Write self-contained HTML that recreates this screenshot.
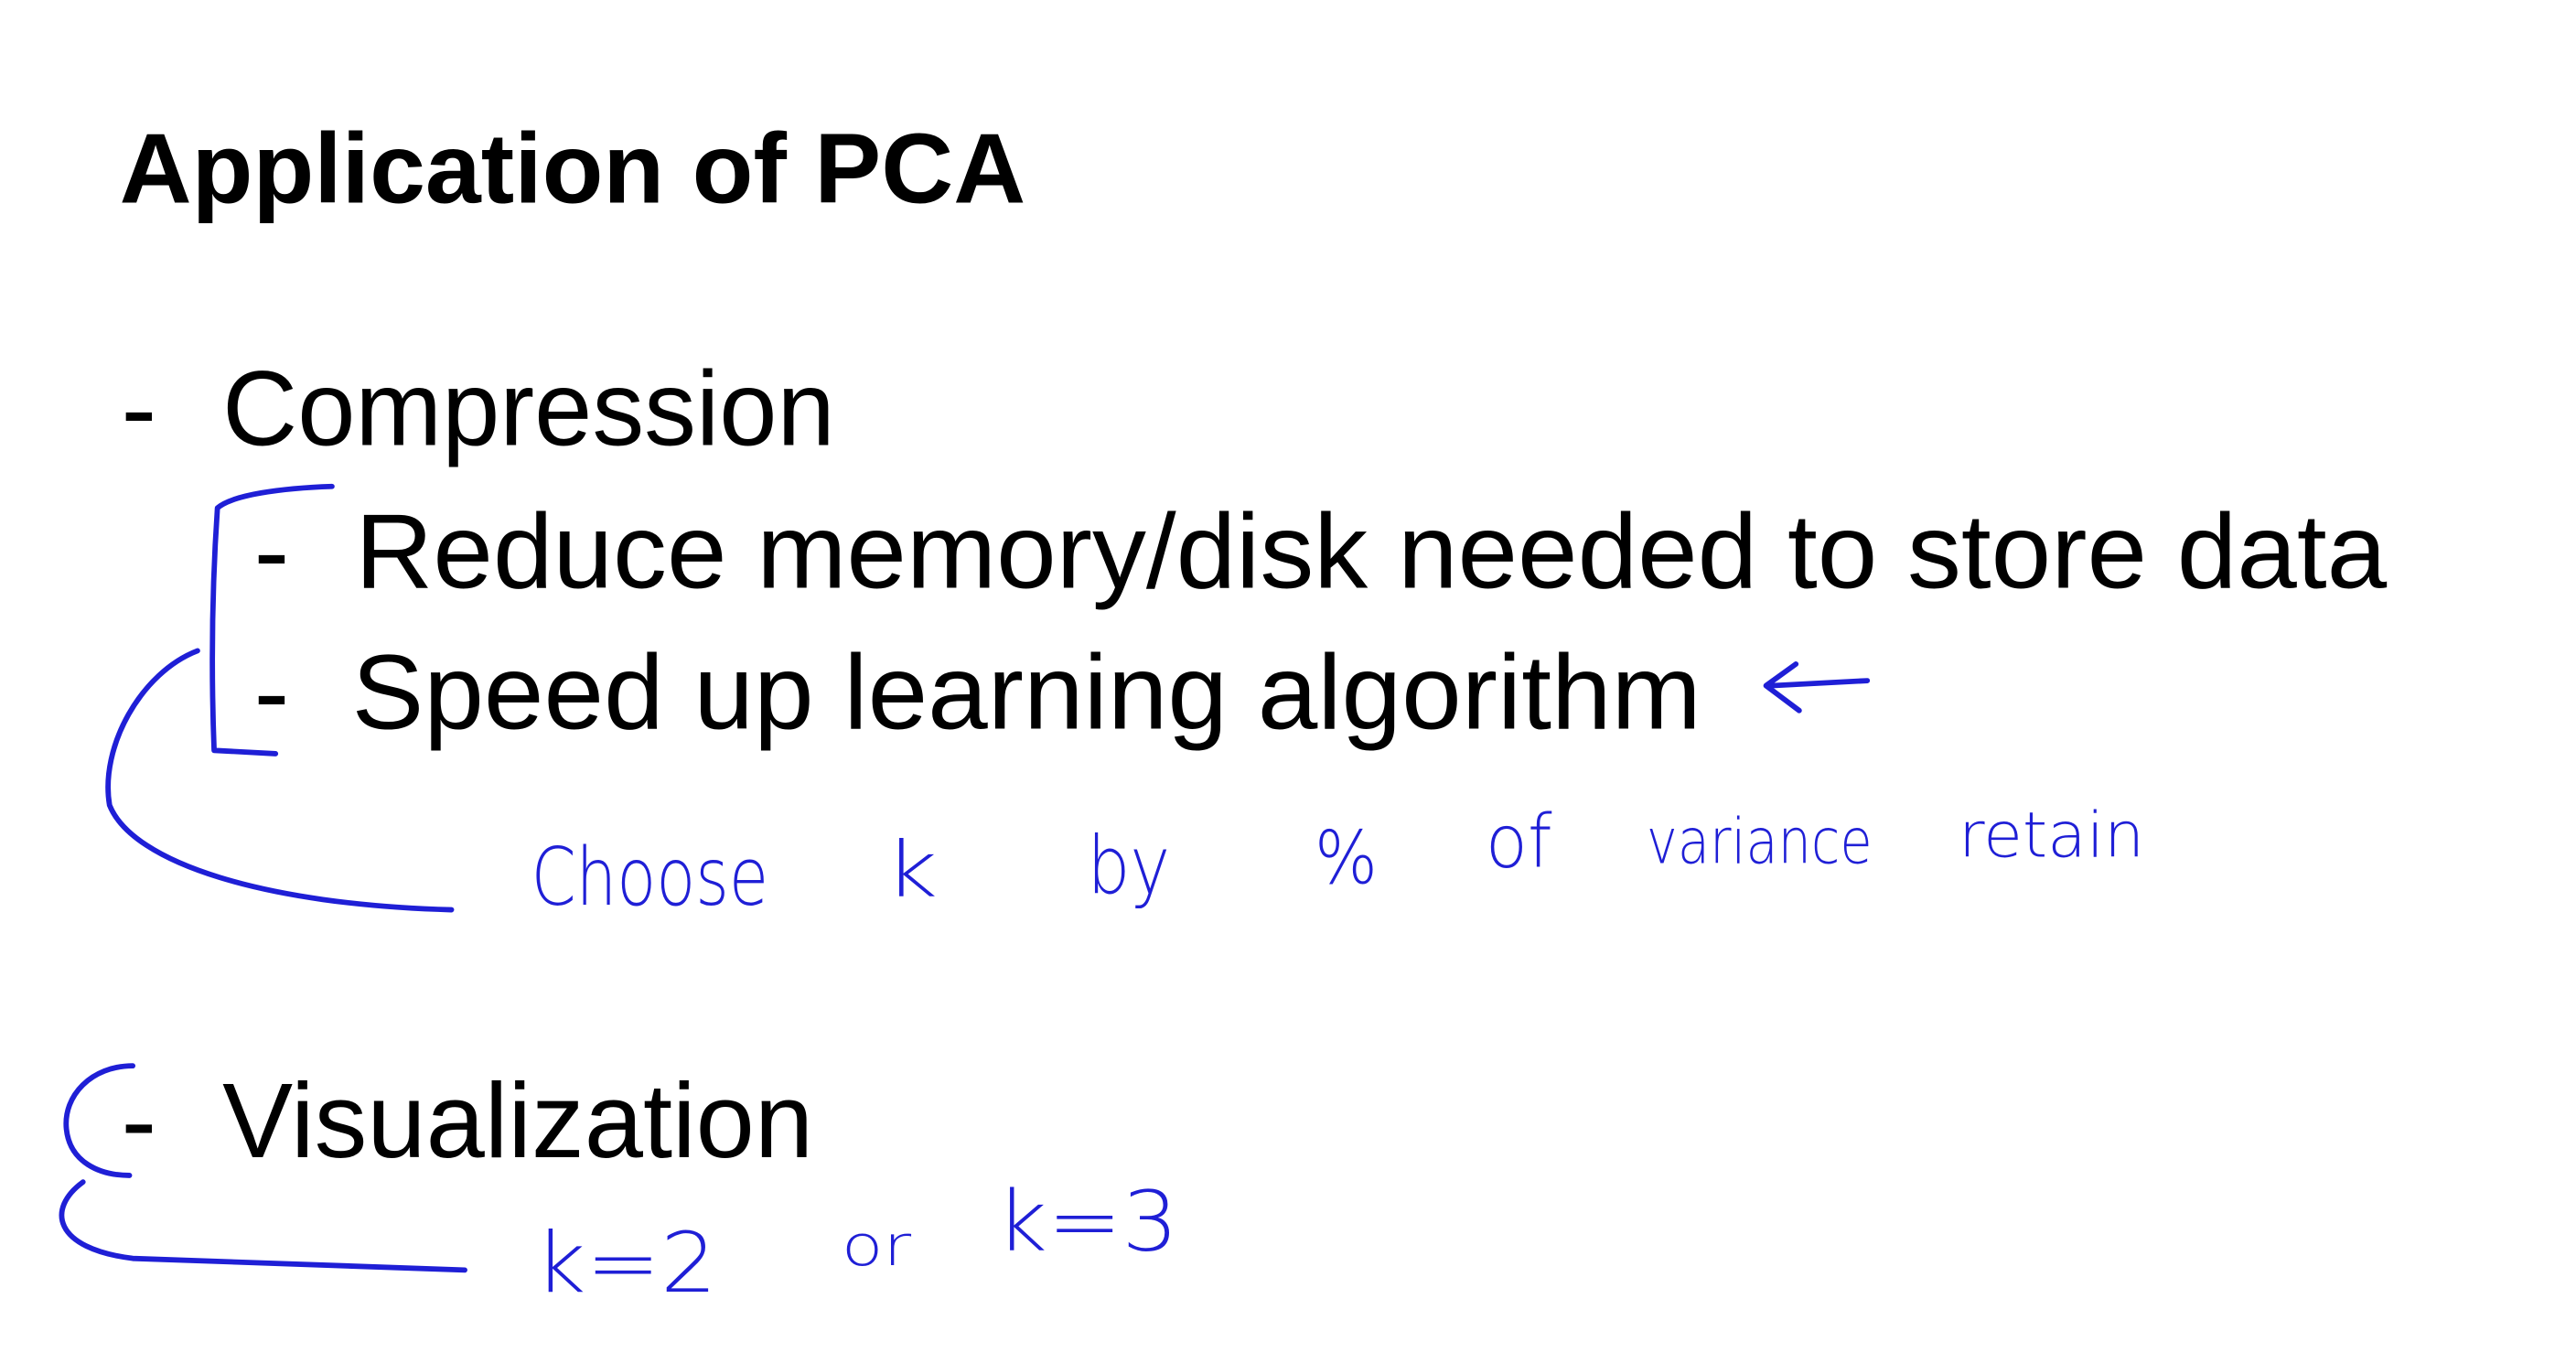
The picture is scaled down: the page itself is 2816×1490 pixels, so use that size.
<!DOCTYPE html>
<html><head><meta charset="utf-8"><style>
html,body{margin:0;padding:0;background:#fff;}
svg{display:block;}
</style></head><body>
<svg width="2816" height="1490" viewBox="0 0 1552 821" preserveAspectRatio="none" xmlns="http://www.w3.org/2000/svg">
<rect width="1552" height="821" fill="#fff"/>
<g font-family="Liberation Sans, Arial, sans-serif" fill="#000">
<text x="72" y="122" font-size="60" font-weight="bold" textLength="546" lengthAdjust="spacingAndGlyphs">Application of PCA</text>
<text x="73" y="268" font-size="64">-</text>
<text x="134" y="268" font-size="64" textLength="369" lengthAdjust="spacingAndGlyphs">Compression</text>
<text x="153" y="354" font-size="64">-</text>
<text x="214" y="354" font-size="64" textLength="1224" lengthAdjust="spacingAndGlyphs">Reduce memory/disk needed to store data</text>
<text x="153" y="439" font-size="64">-</text>
<text x="212" y="439" font-size="64" textLength="813" lengthAdjust="spacingAndGlyphs">Speed up learning algorithm</text>
<text x="73" y="697" font-size="64">-</text>
<text x="134" y="697" font-size="64" textLength="356" lengthAdjust="spacingAndGlyphs">Visualization</text>
</g>
<g fill="none" stroke="#1f1fd6" stroke-width="3.2" stroke-linecap="round" stroke-linejoin="round">
<path d="M200,293 C170,294 140,298 131,306 C128,350 127,400 129,452 L166,454"/>
<path d="M119,392 C85,405 60,450 66,485 C80,520 160,545 272,548"/>
<path d="M1125,410 L1068,413 M1082,400 L1064,413 L1084,428"/>
<path d="M80,642 C55,642 38,660 40,680 C42,700 60,708 78,708"/>
<path d="M50,712 C28,728 32,752 80,758 L280,765"/>
</g>
<g font-family="DejaVu Sans, sans-serif" fill="#1f1fd6" font-weight="200">
<text x="320" y="545" font-size="48" textLength="143" lengthAdjust="spacingAndGlyphs">Choose</text>
<text x="533" y="540" font-size="46" textLength="32" lengthAdjust="spacingAndGlyphs">k</text>
<text x="655" y="538" font-size="48" textLength="50" lengthAdjust="spacingAndGlyphs">by</text>
<text x="792" y="532" font-size="44" textLength="38" lengthAdjust="spacingAndGlyphs">%</text>
<text x="895" y="522" font-size="44" textLength="40" lengthAdjust="spacingAndGlyphs">of</text>
<text x="992" y="520" font-size="38" textLength="136" lengthAdjust="spacingAndGlyphs">variance</text>
<text x="1180" y="516" font-size="38" textLength="112" lengthAdjust="spacingAndGlyphs">retain</text>
<text x="322" y="778" font-size="50" textLength="110" lengthAdjust="spacingAndGlyphs">k=2</text>
<text x="507" y="762" font-size="34" textLength="42" lengthAdjust="spacingAndGlyphs">or</text>
<text x="600" y="753" font-size="50" textLength="110" lengthAdjust="spacingAndGlyphs">k=3</text>
</g>
</svg>
</body></html>
